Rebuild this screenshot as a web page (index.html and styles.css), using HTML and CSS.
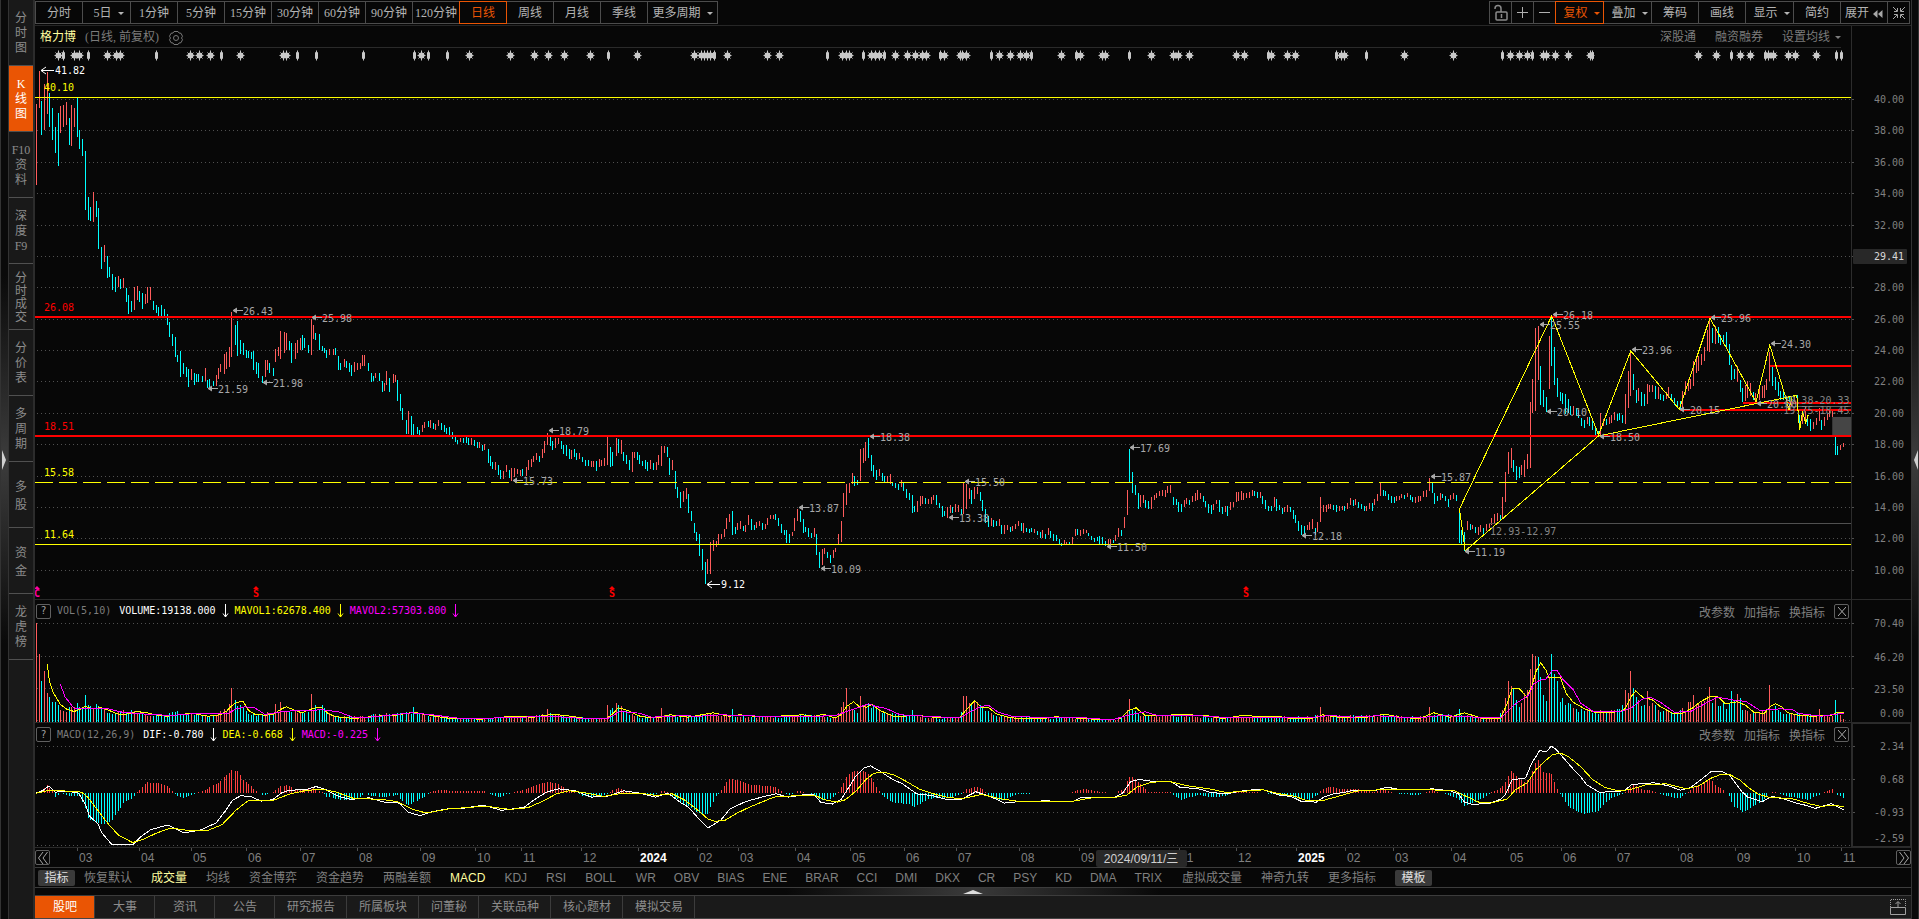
FILE: index.html
```html
<!DOCTYPE html>
<html lang="zh-CN">
<head>
<meta charset="utf-8">
<title>格力博 日线</title>
<link rel="stylesheet" href="styles.css">
</head>
<body>
<div class="app">
  <button class="strip strip-left" aria-label="展开左侧栏"><svg width="4" height="20" viewBox="0 0 4 20"><path d="M0 0L4 10L0 20Z" fill="#d0d0d0"/></svg></button>
  <nav class="side">
    <button>分<br>时<br>图</button>
    <button class="on">K<br>线<br>图</button>
    <button>F10<br>资<br>料</button>
    <button>深<br>度<br>F9</button>
    <button class="tight">分<br>时<br>成<br>交</button>
    <button>分<br>价<br>表</button>
    <button>多<br>周<br>期</button>
    <button class="loose">多<br>股</button>
    <button class="loose">资<br>金</button>
    <button>龙<br>虎<br>榜</button>
  </nav>
  <main class="work">
    <div class="toolbar">
      <div class="group">
        <button>分时</button><button class="drop">5日<i class="caret"></i></button><button>1分钟</button><button>5分钟</button><button>15分钟</button><button>30分钟</button><button>60分钟</button><button>90分钟</button><button>120分钟</button><button class="on">日线</button><button>周线</button><button>月线</button><button>季线</button><button class="wide">更多周期<i class="caret"></i></button>
      </div>
      <div class="group">
        <button class="icon" aria-label="锁定"><svg width="16" height="18" viewBox="0 0 16 18" fill="none" stroke="#8a8a8a"><rect x="3" y="8" width="11" height="8" rx="1" stroke-width="1.5"/><path d="M8.5 10v4M2 5V4.500a3 3 0 0 1 6 0V8" stroke-width="1.5"/></svg></button>
        <button class="icon" aria-label="放大"><svg width="13" height="13" viewBox="0 0 13 13" stroke="#b0b0b0"><path d="M1 6.500H12M6.500 1V12"/></svg></button>
        <button class="icon" aria-label="缩小"><svg width="13" height="13" viewBox="0 0 13 13" stroke="#b0b0b0"><path d="M1 6.500H12"/></svg></button>
        <button class="drop on">复权<i class="caret"></i></button><button class="drop">叠加<i class="caret"></i></button><button>筹码</button><button>画线</button><button class="drop">显示<i class="caret"></i></button><button>简约</button>
        <button>展开<svg width="10" height="8" viewBox="0 0 10 8" fill="#a8a8a8"><path d="M4.500 0V8L0 4ZM9.500 0V8L5 4Z"/></svg></button>
        <button class="icon" aria-label="收起"><svg width="14" height="14" viewBox="0 0 14 14" fill="none" stroke="#a8a8a8"><path d="M1 1L5 5M2 5.500H5.500V2M13 1L9 5M12 5.500H8.500V2M1 13L5 9M2 8.500H5.500V12M13 13L9 9M12 8.500H8.500V12"/></svg></button>
      </div>
    </div>

    <section class="panel panel-main">
      <div class="plot">
        <header class="title">
          <h1>格力博</h1><span>(日线, 前复权)</span>
          <button aria-label="设置"><svg width="16" height="16" viewBox="0 0 16 16" fill="none" stroke="#777"><path d="M6 1.500h4l1 1.500l2 .3l1.500 3l-1 1.700l1 1.700l-1.500 3l-2 .3l-1 1.500h-4l-1-1.500l-2-.3l-1.500-3l1-1.700l-1-1.700l1.500-3l2-.3Z"/><circle cx="8" cy="8" r="2.500"/></svg></button>
          <div class="links"><a href="#">深股通</a><a href="#">融资融券</a><a href="#">设置均线<i class="caret"></i></a></div>
        </header>
        <svg class="canvas" id="price"></svg>
      </div>
      <svg class="axis" id="priceAxis"></svg>
    </section>

    <section class="panel panel-vol">
      <div class="plot">
        <header class="legend">
          <button class="box" aria-label="指标说明">?</button><span class="name">VOL(5,10)</span>
          <span class="white">VOLUME:19138.000</span><svg class="white" width="7" height="14" viewBox="0 0 7 14"><path d="M3.500 0V13M1 9.500L3.500 13L6 9.500"/></svg>
          <span class="yellow">MAVOL1:62678.400</span><svg class="yellow" width="7" height="14" viewBox="0 0 7 14"><path d="M3.500 0V13M1 9.500L3.500 13L6 9.500"/></svg>
          <span class="magenta">MAVOL2:57303.800</span><svg class="magenta" width="7" height="14" viewBox="0 0 7 14"><path d="M3.500 0V13M1 9.500L3.500 13L6 9.500"/></svg>
          <div class="tools"><button>改参数</button><button>加指标</button><button>换指标</button><button class="box" aria-label="关闭"><svg width="8" height="9" viewBox="0 0 8 9"><path d="M0 0L8 9M8 0L0 9"/></svg></button></div>
        </header>
        <svg class="canvas" id="vol"></svg>
      </div>
      <svg class="axis" id="volAxis"></svg>
    </section>

    <section class="panel panel-macd">
      <div class="plot">
        <header class="legend">
          <button class="box" aria-label="指标说明">?</button><span class="name">MACD(12,26,9)</span>
          <span class="white">DIF:-0.780</span><svg class="white" width="7" height="14" viewBox="0 0 7 14"><path d="M3.500 0V13M1 9.500L3.500 13L6 9.500"/></svg>
          <span class="yellow">DEA:-0.668</span><svg class="yellow" width="7" height="14" viewBox="0 0 7 14"><path d="M3.500 0V13M1 9.500L3.500 13L6 9.500"/></svg>
          <span class="magenta">MACD:-0.225</span><svg class="magenta" width="7" height="14" viewBox="0 0 7 14"><path d="M3.500 0V13M1 9.500L3.500 13L6 9.500"/></svg>
          <div class="tools"><button>改参数</button><button>加指标</button><button>换指标</button><button class="box" aria-label="关闭"><svg width="8" height="9" viewBox="0 0 8 9"><path d="M0 0L8 9M8 0L0 9"/></svg></button></div>
        </header>
        <svg class="canvas" id="macd"></svg>
      </div>
      <svg class="axis boxed" id="macdAxis"></svg>
    </section>

    <div class="timeline">
      <button class="box" aria-label="向前"><svg width="10" height="12" viewBox="0 0 10 12"><path d="M5 0L0.500 6L5 12M9.500 0L5 6L9.500 12"/></svg></button>
      <svg id="dates"></svg>
      <button class="box" aria-label="向后"><svg width="10" height="12" viewBox="0 0 10 12"><path d="M0.500 0L5 6L0.500 12M5 0L9.500 6L5 12"/></svg></button>
    </div>

    <nav class="indicators">
      <div class="set"><button class="chip">指标</button><button class="near">恢复默认</button><button class="on">成交量</button><button>均线</button><button>资金博弈</button><button>资金趋势</button><button>两融差额</button><button class="on">MACD</button><button>KDJ</button><button>RSI</button><button>BOLL</button></div>
      <div class="set latin"><button>WR</button><button>OBV</button><button>BIAS</button><button>ENE</button><button>BRAR</button><button>CCI</button><button>DMI</button><button>DKX</button><button>CR</button><button>PSY</button><button>KD</button><button>DMA</button><button>TRIX</button></div>
      <div class="set"><button>虚拟成交量</button><button>神奇九转</button><button>更多指标</button><button class="chip">模板</button></div>
    </nav>

    <button class="handle" aria-label="展开下方"><svg width="20" height="4" viewBox="0 0 20 4"><path d="M0 4L10 0L20 4Z" fill="#ddd"/></svg></button>

    <nav class="tabs">
      <button class="on">股吧</button><button>大事</button><button>资讯</button><button>公告</button><button>研究报告</button><button>所属板块</button><button>问董秘</button><button>关联品种</button><button>核心题材</button><button>模拟交易</button>
      <button class="dock" aria-label="弹出"><svg width="16" height="16" viewBox="0 0 16 16" fill="none" stroke="#a0a0a0"><path d="M.5 8.500h15v7H.5Z"/><path d="M.5 8V.5h15V8" stroke-dasharray="1 1"/><path d="M8 8V3M5.500 5L8 2.500L10.500 5"/></svg></button>
    </nav>
  </main>
  <button class="strip strip-right" aria-label="展开右侧栏"><svg width="4" height="20" viewBox="0 0 4 20"><path d="M4 0L0 10L4 20Z" fill="#d0d0d0"/></svg></button>
</div>
<script src="charts.js"></script>
</body>
</html>
```
FILE: styles.css
```css
* { box-sizing: border-box; }

body {
  margin: 0;
  background: #070707;
  color: #a0a0a0;
  font: 12px/15px "Liberation Serif", "Noto Sans CJK SC", serif;
}

button {
  margin: 0;
  padding: 0;
  border: 0;
  background: none;
  color: inherit;
  font: inherit;
  white-space: nowrap;
}

a { color: inherit; text-decoration: none; }

svg { display: block; flex: none; }

.app { display: flex; height: 100vh; overflow: hidden; }

.strip { width: 8px; display: flex; align-items: center; }
.strip-left {
  border-left: 1px solid #333;
  background: linear-gradient(#0a0a0a 30%, #3c3c3c 50%, #0a0a0a 70%);
  padding-left: 1px;
}
.strip-right {
  border-right: 1px solid #333;
  border-left: 1px solid #333;
  background: linear-gradient(#0a0a0a 30%, #3c3c3c 50%, #0a0a0a 70%);
  padding-left: 2px;
}

.side {
  width: 27px;
  display: flex;
  flex-direction: column;
  background: #191919;
  border-left: 1px solid #333;
  border-right: 2px solid #2c2c2c;
}
.side button { height: 66px; padding-top: 2px; border-bottom: 1px solid #505050; color: #8c8c8c; }
.side .tight { line-height: 13px; }
.side .loose { line-height: 18px; }
.side .on { background: #ea5504; color: #fff; }

.work { flex: 1; min-width: 0; display: flex; flex-direction: column; border-bottom: 1px solid #444; }

.toolbar {
  height: 26px;
  padding: 1px 1px 0 0;
  display: flex;
  justify-content: space-between;
  border-bottom: 1px solid #262626;
}
.group { display: flex; }
.group button {
  position: relative;
  width: 48px;
  height: 23px;
  padding-top: 2px;
  margin-right: -1px;
  border: 1px solid #4c4c4c;
  display: flex;
  align-items: center;
  justify-content: center;
  gap: 6px;
  color: #b4b4b4;
}
.group button.icon { width: 23px; padding: 0; }
.group button.drop { width: 49px; padding-left: 4px; }
.group button.wide { width: 71px; }
.group button.on { z-index: 1; border-color: #ea5504; color: #ea5504; }
.group:last-child button { gap: 4px; }
.group:last-child button.drop { gap: 6px; }
.group:last-child button:last-child { margin-right: 0; }

.caret {
  display: inline-block;
  border: 3px solid transparent;
  border-top-color: currentColor;
  border-bottom: 0;
}

.panel { display: flex; min-height: 0; border-bottom: 1px solid #2a2a2a; }
.panel-main { flex: 575; }
.panel-vol { flex: 123; }
.panel-macd { flex: 124; }

.plot { flex: 1; min-width: 0; display: flex; flex-direction: column; border-right: 1px solid #2c2c2c; }
.canvas { width: 100%; flex: 1; min-height: 0; }
.axis { width: 59px; height: 100%; }
.axis.boxed { border: 1px solid #2c2c2c; }

.title {
  height: 22px;
  padding-top: 2px;
  margin: 0 10px 0 5px;
  display: flex;
  align-items: center;
  gap: 9px;
  border-bottom: 1px solid #2a2a2a;
  color: #7c7c7c;
}
.title h1 { margin: 0; font: inherit; color: #ffffa0; }
.links { margin-left: auto; display: flex; gap: 19px; }
.links .caret { margin: 0 0 2px 5px; }

.legend {
  height: 22px;
  padding: 1px 2px 0 1px;
  display: flex;
  align-items: center;
  gap: 6px;
  font: 10px/14px "DejaVu Sans Mono", monospace;
}
.legend svg { fill: none; stroke: currentColor; }
.name { color: #7c7c7c; margin-right: 2px; }
.white { color: #fff; }
.yellow { color: #ff0; }
.magenta { color: #f0f; }
.tools {
  margin-left: auto;
  display: flex;
  align-items: center;
  gap: 9px;
  color: #808080;
  font: 12px/15px "Noto Sans CJK SC", sans-serif;
}
.box {
  width: 15px;
  height: 15px;
  display: flex;
  align-items: center;
  justify-content: center;
  border: 1px solid #606060;
  border-radius: 2px;
}
.legend .box svg, .timeline .box svg { fill: none; stroke: #a8a8a8; }

text { font: 10px "DejaVu Sans Mono", monospace; }
.date { font: 12px "Liberation Sans", "Noto Sans CJK SC", sans-serif; }

.timeline { height: 19px; display: flex; align-items: center; }
.timeline svg#dates { flex: 1; width: 0; height: 100%; }

.indicators {
  height: 21px;
  padding: 1px 0 0 3px;
  display: flex;
  align-items: center;
  gap: 20px;
  border-top: 1px solid #3c3c3c;
  border-bottom: 1px solid #3c3c3c;
  color: #808080;
  font: 12px/15px "Liberation Sans", "Noto Sans CJK SC", sans-serif;
}
.set { display: flex; align-items: center; gap: 19px; }
.set.latin { gap: 18px; }
.indicators .near { margin-left: -10px; }
.indicators .on { color: #ffffa0; }
.indicators .chip { width: 37px; height: 16px; border-radius: 2px; background: #3a3a3a; color: #e0e0e0; }

.handle {
  height: 7px;
  display: flex;
  justify-content: center;
  align-items: center;
  background: linear-gradient(90deg, #080808 40%, #3a3a3a 50%, #080808 60%);
}

.tabs { height: 23px; display: flex; background: #1a1a1a; border-top: 1px solid #3c3c3c; color: #8c8c8c; }
.tabs button { min-width: 60px; padding: 0 11px 0 12px; border-right: 1px solid #3c3c3c; }
.tabs .on { background: #ea5504; color: #fff; }
.tabs .dock { min-width: 0; margin-left: auto; padding: 0 5px; border: 0; display: flex; align-items: center; }
```
FILE: charts.js
```js
// Horizontal data units span the whole plot; vertical units are thirds of a pixel at the base height.
const SPAN = 4453;
const SECOND = 1568 - 86, THIRD = 3136 - 86, FIRST = -86;

const parse = (text, offset) => text.trim().split(/\s+/).map(t => {
  const v = t.split(',').map(Number);
  v[0] += offset;
  return v;
});
const join = (a, b, c) => [...parse(a, FIRST), ...parse(b, SECOND), ...parse(c, THIRD)];

const bars = join(`
89,312,555 97,213,324 101,303,405 109,252,391 116,216,342 121,279,381 128,324,420 136,381,459 143,339,498 148,318,399 155,315,381 163,306,375 170,354,435 175,315,438 182,324,381 190,294,411 195,390,447 202,417,468 209,453,630 217,591,660 221,621,663 229,576,666 236,603,651 241,624,747 248,741,807 256,735,786 263,768,834 268,800,831 275,822,870 283,831,876 291,828,861 295,837,867 302,834,864 310,864,906 315,885,942 322,903,935 329,861,930 337,858,900 342,873,906 349,879,927 356,882,912 361,861,910 368,861,900 376,903,930 383,915,940 388,921,948 395,915,950 403,927,950 410,942,976 415,966,1010 422,1002,1037 430,1011,1070 435,1064,1086 442,1053,1130 449,1089,1123 457,1101,1132 462,1107,1160 469,1107,1140 476,1119,1155 482,1122,1146 488,1122,1146 496,1128,1146 503,1104,1143 508,1140,1164 515,1137,1164 523,1143,1158 530,1125,1158 535,1104,1137 542,1092,1116 550,1062,1122 555,1056,1107 562,1041,1101 569,936,1070 577,975,1035 582,963,1067 589,1020,1062 597,1029,1064 604,1050,1074 609,1053,1074 616,1056,1077 623,1053,1110 628,1086,1122 635,1089,1134 643,1128,1148 650,1080,1131 655,1080,1110 662,1089,1120 670,1104,1127 675,1047,1085 682,1041,1067 689,993,1077 697,996,1060 702,999,1050 709,1023,1050 716,1029,1089 724,1029,1077 729,1020,1058 736,1014,1050 743,1005,1050 748,1014,1044 756,1035,1059 763,957,1065 770,975,1017 775,999,1020 783,1002,1050 790,1038,1053 795,1044,1059 802,1050,1074 809,1047,1064 817,1047,1065 822,1044,1065 829,1068,1110 836,1089,1110 844,1077,1100 849,1083,1104 856,1089,1116 863,1095,1128 869,1086,1116 876,1089,1110 883,1089,1107 890,1065,1098 895,1065,1098 903,1089,1113 910,1119,1146 915,1128,1143 922,1119,1134 930,1119,1143 937,1143,1176 942,1149,1173 949,1113,1155 956,1134,1176 964,1122,1149 969,1125,1147 976,1140,1203 983,1182,1233 988,1224,1260 996,1260,1302 1003,1233,1302 1010,1248,1305 1015,1272,1305 1023,1281,1302 1030,1290,1305 1035,1275,1296 1042,1266,1284 1050,1263,1281 1057,1260,1284 1062,1269,1287 1069,1272,1290 1076,1260,1278 1084,1269,1290 1089,1275,1296 1096,1284,1302 1103,1281,1308 1116,1308,1326 1123,1320,1332 1130,1314,1326 1150,1314,1335 1170,1326,1344 1189,1332,1350 1197,1347,1389 1209,1386,1407 1223,1395,1425 1228,1410,1437 1236,1413,1437 1243,1395,1416 1250,1410,1434 1255,1404,1443 1270,1407,1422 1282,1407,1428 1290,1401,1428 1297,1380,1410 1309,1368,1386 1316,1359,1380 1323,1368,1386 1336,1323,1359 1343,1299,1335 1349,1308,1338 1356,1323,1350 1363,1314,1344 1370,1314,1332 1383,1335,1362 1390,1335,1368 1402,1350,1377 1415,1359,1380 1429,1371,1386 1443,1380,1398 1456,1383,1401 1464,1383,1413 1476,1380,1398 1489,1365,1395 1491,1311,1395 1496,1340,1400 1503,1356,1397 1511,1314,1368 1518,1317,1359 1523,1320,1362 1530,1356,1383 1537,1365,1392 1543,1380,1410 1550,1356,1416 1557,1356,1374 1564,1356,1380`, `
1,1365,1392 8,1383,1398 16,1380,1407 21,1386,1413 28,1380,1407 35,1389,1410 43,1386,1410 48,1365,1395 55,1338,1398 62,1338,1359 70,1341,1371 75,1374,1425 82,1380,1410 89,1413,1467 94,1461,1494 101,1476,1524 109,1473,1506 116,1464,1497 121,1482,1539 128,1533,1563 136,1569,1599 141,1596,1623 148,1602,1668 155,1647,1710 163,1686,1752 168,1677,1722 175,1626,1722 182,1620,1653 190,1623,1641 195,1602,1632 202,1602,1617 209,1587,1611 214,1554,1587 221,1542,1566 229,1533,1605 236,1581,1602 241,1569,1590 248,1563,1587 256,1578,1593 261,1575,1596 268,1545,1575 275,1557,1590 283,1575,1590 288,1566,1584 295,1563,1578 302,1569,1590 309,1572,1587 315,1554,1575 322,1545,1557 329,1545,1557 334,1542,1560 342,1554,1578 349,1572,1599 356,1590,1605 361,1590,1629 368,1602,1629 376,1596,1608 381,1554,1593 388,1527,1563 395,1533,1566 403,1557,1599 408,1581,1596 415,1584,1611 422,1599,1614 430,1584,1611 435,1602,1665 442,1656,1704 449,1647,1695 454,1644,1662 462,1656,1674 469,1665,1689 476,1650,1674 481,1644,1656 489,1602,1632 496,1563,1626 501,1479,1551 508,1452,1515 515,1449,1479 523,1419,1452 528,1428,1458 535,1440,1456 542,1347,1443 550,1344,1389 555,1326,1383 562,1314,1374,1 569,1365,1413 574,1395,1431 582,1410,1440 589,1407,1428 596,1419,1443 601,1428,1446 608,1428,1446 616,1422,1452 621,1449,1458 628,1449,1464 635,1452,1470 642,1440,1461 648,1449,1473 655,1467,1494 662,1479,1500 670,1485,1539 675,1518,1536 682,1503,1536 689,1488,1518 701,1494,1512 709,1497,1512 716,1491,1512 721,1485,1500 728,1485,1515 736,1509,1524 743,1518,1551 748,1533,1548 756,1521,1554 763,1515,1539 768,1521,1539 775,1512,1536 783,1515,1536 790,1527,1542 795,1446,1542 802,1452,1527 809,1464,1497 814,1470,1512 822,1461,1497 829,1461,1482 836,1476,1503 841,1500,1533 849,1527,1569 856,1548,1581 863,1554,1578 876,1563,1578 883,1557,1578 888,1575,1602 895,1575,1602 903,1575,1590 915,1578,1593 930,1563,1578 942,1569,1599 950,1584,1596 962,1584,1596 976,1593,1605 989,1590,1614 996,1602,1617 1003,1584,1605 1015,1602,1623 1030,1617,1632 1035,1629,1638 1042,1620,1632 1054,1626,1635 1062,1611,1632 1069,1587,1608 1081,1590,1608 1096,1590,1600 1109,1608,1620 1123,1611,1623 1128,1608,1632 1143,1623,1639 1150,1617,1635 1162,1620,1630 1175,1584,1611 1182,1590,1608 1189,1551,1584 1197,1470,1545 1201,1347,1446,1 1209,1416,1478,1 1216,1455,1485 1224,1479,1527 1236,1485,1509 1248,1503,1527 1256,1491,1527 1262,1485,1500 1275,1473,1488 1289,1470,1491 1296,1458,1479 1302,1455,1479 1309,1491,1515 1316,1497,1515 1321,1506,1536 1329,1512,1536 1336,1500,1521 1349,1500,1515 1363,1479,1503 1368,1470,1500 1376,1479,1497 1389,1503,1521 1396,1512,1539 1402,1515,1542 1416,1500,1512 1422,1500,1536 1429,1521,1542 1436,1518,1536 1442,1518,1548 1449,1506,1530 1456,1506,1521 1464,1476,1506 1476,1473,1500 1489,1479,1494 1503,1470,1488 1509,1473,1488 1523,1476,1494 1535,1500,1527 1543,1518,1533 1550,1518,1533 1557,1491,1521 1562,1497,1533`, `
1,1515,1530 8,1524,1542 15,1521,1535 21,1515,1535 28,1521,1536 35,1530,1557 41,1545,1569 48,1563,1593 55,1575,1605 62,1578,1605 70,1575,1590 82,1557,1587 89,1584,1605 94,1566,1596 102,1491,1566 109,1515,1536 116,1515,1536 121,1512,1527 134,1515,1530 142,1515,1536 148,1518,1533 156,1518,1530 168,1509,1527 176,1494,1515 182,1500,1518 195,1506,1524 203,1512,1527 215,1518,1533 229,1509,1533 235,1497,1515 242,1482,1503 249,1449,1488 256,1470,1488 262,1473,1488 269,1482,1500 276,1488,1509 289,1488,1503 302,1482,1494 316,1479,1491 322,1485,1500 335,1491,1509 348,1488,1503 361,1470,1491 370,1434,1473 376,1449,1479 382,1479,1512 388,1488,1503 396,1479,1500 402,1482,1494 409,1488,1503 416,1497,1521 422,1485,1500 435,1485,1503 443,1527,1629 449,1590,1635 455,1596,1653 462,1563,1590 469,1572,1590 476,1575,1587 489,1581,1605 502,1584,1602 509,1572,1593 516,1569,1584 522,1554,1575 529,1542,1569 536,1539,1563 543,1545,1563 548,1491,1557 555,1416,1506 563,1356,1422 570,1344,1404 575,1380,1416 583,1398,1440 590,1401,1434 595,1395,1425 602,1380,1431 610,1362,1407 617,1206,1404 622,1137,1239 629,984,1233 637,978,1140 641,1098,1215 649,1170,1221 656,1191,1236 663,1008,1167 669,948,1098,1 676,1041,1155 683,1134,1191 690,1176,1203 695,1179,1212 703,1182,1242 710,1197,1239 715,1218,1245 722,1218,1245 730,1224,1248 735,1230,1254 742,1254,1278 750,1260,1284 757,1251,1272 762,1251,1278 769,1254,1290 777,1281,1305 784,1293,1305 789,1239,1305 796,1257,1278 803,1257,1275 810,1251,1272 816,1245,1269 823,1236,1260 830,1242,1263 843,1245,1269 850,1182,1272 863,1056,1188 870,1122,1170 877,1170,1209 883,1164,1203 890,1176,1218 897,1182,1218 904,1152,1212 910,1155,1176 917,1155,1176 924,1158,1197 930,1161,1197 937,1182,1200 950,1176,1197 956,1161,1194 964,1182,1200 977,1203,1224 984,1203,1230 990,1173,1224 997,1143,1185 1010,1137,1167 1017,1083,1158 1024,1077,1119 1030,1068,1113 1037,1062,1095 1044,1041,1083 1051,990,1053 1057,954,1056 1064,984,1029,1 1071,978,1032 1077,981,1029 1084,1005,1035 1091,1005,1032 1098,996,1044 1104,1032,1095 1111,1095,1140 1118,1107,1137 1124,1098,1146 1131,1140,1176 1138,1164,1206 1149,1143,1194 1156,1149,1188 1163,1176,1200 1170,1179,1206 1185,1158,1194 1191,1155,1194 1197,1137,1170 1204,1056,1143 1211,1098,1158 1217,1131,1170 1224,1146,1188 1231,1173,1200 1244,1188,1212 1251,1191,1230 1258,1191,1218 1264,1191,1212 1271,1185,1230 1277,1245,1290 1284,1230,1272 1291,1221,1269 1297,1245,1278 1304,1257,1293 1311,1266,1287 1318,1254,1275 1325,1225,1262 1331,1260,1290 1338,1251,1278 1345,1242,1260 1351,1230,1251 1358,1233,1252 1366,1308,1365 1371,1338,1365 1378,1335,1350 1385,1329,1341`);

const volume = join(`
89,69 97,162 101,243 109,213 116,279 128,303 143,300 155,336 190,310 209,300 241,310 268,335 320,330 345,340 400,345 430,335 470,340 520,348 555,325 569,300 589,310 610,340 650,340 689,325 710,330 740,335 763,320 790,320 820,348 900,345 1015,335 1080,350 1180,354 1300,348 1350,335 1390,348 1480,355 1496,330 1520,310 1540,340 1567,345`, `
1,348 60,345 120,348 175,338 230,345 340,350 390,340 440,342 480,352 497,315 508,305 520,310 535,340 545,315 580,318 610,340 670,342 700,350 785,352 795,300 810,310 835,310 860,335 880,345 940,350 1070,352 1170,357 1190,345 1203,325 1230,345 1320,345 1420,350 1560,350`, `
1,350 102,345 240,345 360,348 380,342 440,342 480,348 540,354 548,320 560,262 570,240 583,290 595,310 605,280 617,210 629,170 637,180 649,250 656,290 663,210 669,180 676,225 690,290 700,300 710,300 720,320 750,330 800,335 840,325 855,280 875,290 890,315 905,290 930,325 980,335 1017,300 1030,305 1057,280 1071,295 1098,315 1111,300 1131,300 1140,325 1170,340 1190,330 1210,320 1224,325 1245,340 1320,345 1360,345 1371,335 1385,352`);
const peaks = join(`209,285,0 569,264,1 577,300,0 689,306,1 675,312,1 763,282,1 1015,321,0 1343,327,1 1491,315,1 1511,309,1`,
  `55,324,1 229,327,0 501,306,1 508,264,1 542,288,1 670,330,0 795,288,1 802,288,1 1197,330,1 1201,297,1`,
  `102,321,1 370,321,1 443,327,0 617,207,1 622,162,1 629,168,1 637,171,0 669,162,0 676,222,0 863,213,1 850,270,1 870,262,0 904,273,1 1017,285,1 1057,261,1 1111,273,0 1124,282,1 1204,255,1 1325,327,1 1366,300,0`);
const ma1 = join(`116,192 121,240 130,275 148,312 165,327 182,333 195,327 209,318 224,324 248,322 268,330 290,341 310,341 335,333 360,337 390,345 410,347 430,344 470,338 510,347 540,343 555,333 569,315 582,305 597,304 610,330 625,341 650,344 670,341 690,326 702,319 720,328 740,337 770,323 788,320 805,340 825,349 870,354 920,347 970,344 1015,335 1045,342 1090,352 1180,356 1250,348 1310,350 1355,341 1400,347 1440,355 1485,355 1503,340 1516,322 1540,330`,
  `1,347 20,351 50,351 75,343 120,350 180,337 220,347 245,343 290,348 340,347 400,343 430,348 450,341 480,352 493,345 508,318 525,304 540,319 558,320 570,312 590,330 625,348 665,346 690,346 740,352 785,352 800,330 822,301 840,322 855,320 875,340 910,352 985,355 1020,349 1080,353 1140,358 1180,354 1200,330 1218,322 1240,345 1330,343 1385,344 1430,354 1475,346`,
  `1,348 35,355 90,352 108,343 150,351 210,351 260,341 300,351 345,354 380,337 420,350 455,337 500,354 543,355 560,310 572,265 590,265 608,290 620,260 630,215 642,187 655,210 662,230 690,230 705,280 722,306 750,325 780,337 835,334 850,324 863,290 875,272 895,293 915,297 935,318 965,338 990,338 1015,322 1035,303 1060,287 1078,290 1095,310 1125,304 1145,315 1165,335 1190,339 1205,318 1218,310 1232,318 1248,337 1275,345 1310,347 1355,344 1370,335 1385,336`);
const ma2 = join(`148,252 160,290 182,324 265,325 300,335 345,340 420,345 480,339 560,338 580,325 600,319 625,322 650,342 700,332 790,328 830,334 870,352 920,349 1010,337 1060,343 1130,354 1230,352 1350,347 1430,354 1490,354 1520,333`,
  `1,338 30,350 100,346 150,347 200,343 340,349 480,346 510,332 540,320 562,310 580,318 605,324 640,343 700,347 785,352 810,335 835,320 855,314 880,335 915,348 1000,351 1080,351 1160,358 1195,345 1240,334 1270,345 1350,344 1440,351`,
  `1,350 80,351 125,345 180,350 240,346 310,351 360,350 400,345 500,351 545,352 575,315 595,298 612,285 625,250 640,240 655,236 670,212 682,210 695,235 722,268 740,308 770,332 835,334 865,322 890,297 910,290 935,305 970,335 1010,333 1040,313 1075,290 1120,300 1145,303 1180,330 1230,325 1260,328 1275,339 1330,347 1385,338`);
const dif = join(`89,580 105,572 120,559 135,577 170,575 193,580 210,615 220,650 240,672 250,700 275,736 325,736 345,712 370,690 412,676 450,700 490,692 530,670 555,630 570,602 590,588 615,590 640,604 668,600 690,580 710,571 750,570 775,560 800,570 830,590 860,599 905,594 945,608 980,610 1000,637 1030,648 1060,636 1100,627 1140,625 1185,616 1230,632 1285,623 1310,600 1340,577 1370,567 1410,573 1450,592 1490,589 1530,573`,
  `1,580 40,592 70,580 100,608 120,622 148,660 168,685 200,661 222,628 260,606 300,592 335,582 365,592 410,584 430,586 445,608 473,613 495,598 515,560 530,530 550,505 567,498 590,514 620,538 645,552 680,582 720,588 750,598 790,598 825,576 860,590 895,610 930,606 1000,603 1035,606 1065,604 1085,592 1165,593 1185,580 1205,545 1225,539 1260,545 1305,546 1325,562 1375,568 1400,578 1440,582 1480,573 1525,568`,
  `1,586 30,590 55,605 92,607 110,592 135,582 160,578 185,571 235,572 265,562 290,568 350,570 375,567 420,573 440,582 455,607 475,614 515,611 545,598 555,585 572,540 605,534 620,490 640,451 655,456 668,439 680,448 695,470 720,505 740,530 755,555 785,577 830,576 850,570 865,554 920,549 955,558 985,571 1010,563 1035,540 1060,515 1085,514 1105,526 1120,550 1135,575 1150,592 1185,606 1210,590 1240,598 1265,609 1290,616 1315,626 1355,612 1385,630`);
const dea = join(`89,580 125,571 200,577 215,592 240,632 265,672 290,706 325,729 350,720 385,700 420,685 470,694 510,692 545,675 580,630 610,602 670,602 710,583 750,572 790,568 825,577 870,597 930,598 975,606 1010,628 1045,640 1100,628 1190,619 1250,629 1295,624 1330,605 1365,582 1395,573 1430,578 1480,590 1530,580`,
  `1,580 40,587 80,582 110,600 140,628 168,658 185,665 210,662 240,640 270,622 330,592 380,588 430,587 455,600 485,607 505,600 530,575 555,540 575,520 600,517 625,526 655,545 685,567 715,580 760,594 795,596 840,584 880,596 925,604 1060,605 1110,594 1170,592 1195,586 1220,562 1255,547 1300,545 1340,557 1400,568 1440,578 1530,570`,
  `1,582 40,590 70,603 105,603 150,588 190,574 280,568 370,570 430,573 460,590 490,607 520,610 560,598 580,570 610,548 630,510 650,486 670,465 690,459 710,470 740,500 770,540 800,563 830,572 860,570 900,555 950,552 1000,567 1030,558 1060,535 1085,523 1105,524 1130,540 1150,562 1175,583 1200,592 1260,597 1300,612 1330,620 1360,616 1385,621`);
const hist = join(`89,580 100,572 116,557 128,572 136,592 150,578 165,588 195,590 205,612 217,655 222,662 240,670 248,674 263,672 275,660 290,635 305,605 322,598 335,580 345,565 361,548 385,550 410,558 420,572 435,588 449,594 475,582 490,577 510,566 540,545 560,520 569,511 582,513 597,540 616,560 628,575 645,588 662,581 675,572 690,558 705,556 730,570 770,566 788,575 800,590 820,597 850,602 880,595 895,581 910,588 945,592 975,585 985,600 1000,618 1020,605 1040,592 1060,574 1085,570 1110,574 1150,573 1190,574 1200,582 1225,593 1245,583 1265,576 1295,567 1320,552 1345,546 1365,550 1390,568 1410,577 1430,588 1465,592 1490,583 1505,570 1520,565 1540,576`,
  `1,583 35,588 55,574 70,576 90,595 105,610 120,617 140,635 155,645 168,642 180,610 190,590 202,572 215,545 222,537 248,543 275,555 335,561 350,575 370,588 390,573 405,577 425,585 450,602 470,597 485,583 497,560 510,528 525,513 555,515 567,530 580,558 592,580 605,597 630,610 660,613 675,621 690,612 710,597 770,592 790,582 802,569 825,561 845,570 860,595 890,602 915,590 930,582 1060,578 1090,566 1130,577 1165,580 1190,567 1201,530 1215,535 1235,560 1250,578 1300,576 1315,590 1330,600 1370,585 1400,593 1430,590 1465,577 1500,575 1530,580`,
  `1,585 40,594 75,600 95,585 105,570 125,560 150,567 190,567 230,577 262,568 280,580 340,586 375,570 395,579 415,585 440,597 455,618 475,610 505,592 520,578 545,565 555,545 570,512 585,530 605,550 617,530 630,485 637,481 650,520 662,520 670,524 680,560 690,583 710,620 730,635 750,642 783,635 800,610 820,592 845,583 855,570 870,555 890,568 920,573 940,584 980,597 1000,580 1017,565 1040,550 1057,535 1075,560 1090,570 1103,585 1115,618 1138,638 1160,622 1185,605 1205,577 1220,576 1240,588 1300,600 1335,578 1358,568 1370,585 1385,594`);

// Event marks: second value 1 draws the narrow form.
const marks = join(`143 154,1 182 194 216,1 262 285 294 383,1 465 488 515 542,1 589 695 702 728,1 775,1 890,1 1015,1 1032 1049,1 1096,1 1150 1250 1309 1343 1383 1448 1490,1 1563`,
  `135 150 158 166 174 182,1 214 314 342 461,1 497 507 515 549,1 569 578 588 601,1 628 655 675 694 702 736,1 748 785 792 802 863,1 883 909 934 948 961,1 1035 1070,1 1081 1135 1142 1201,1 1255 1309 1321 1348 1464 1483 1542,1 1550`,
  `20 40 141,1 153 160 214,1 308 428 548,1 566 590 608 621,1 648 656 676 710 762 769,1 1029 1071 1109,1 1130 1156 1191,1 1200 1212 1249 1265 1316 1366,1 1379,1`);

const calls = [
  [FIRST + 569, 932, '26.43'], [FIRST + 762, 952, '25.98'], [FIRST + 508, 1166, '21.59'], [FIRST + 643, 1148, '21.98'],
  [FIRST + 1343, 1292, '18.79'], [FIRST + 1255, 1442, '15.73'],
  [SECOND + 388, 1522, '13.87'], [SECOND + 442, 1705, '10.09'], [SECOND + 562, 1309, '18.38'], [SECOND + 795, 1445, '15.50'],
  [SECOND + 756, 1552, '13.38'], [SECOND + 1201, 1342, '17.69'], [SECOND + 1143, 1640, '11.50'],
  [THIRD + 370, 1430, '15.87'], [THIRD + 55, 1606, '12.18'], [THIRD + 455, 1654, '11.19'], [THIRD + 669, 943, '26.18'],
  [THIRD + 637, 973, '25.55'], [THIRD + 656, 1234, '20.10'], [THIRD + 784, 1309, '18.50'], [THIRD + 863, 1048, '23.96'],
  [THIRD + 982, 1230, '20.15'], [THIRD + 1057, 952, '25.96'], [THIRD + 1170, 1210, '20.60'], [THIRD + 1204, 1030, '24.30']
];

const months = [[195, '03'], [347, '04'], [474, '05'], [609, '06'], [741, '07'], [881, '08'], [1035, '09'], [1169, '10'], [1282, '11'], [1429, '12']].map(m => [m[0] + FIRST, m[1]])
  .concat([[1, '2024'], [146, '02'], [246, '03'], [386, '04'], [521, '05'], [653, '06'], [781, '07'], [935, '08'], [1082, '09'], [1327, '11'], [1469, '12']].map(m => [m[0] + SECOND, m[1]]))
  .concat([[46, '2025'], [166, '02'], [286, '03'], [428, '04'], [568, '05'], [696, '06'], [828, '07'], [983, '08'], [1123, '09'], [1271, '10'], [1384, '11']].map(m => [m[0] + THIRD, m[1]]));

const RED = '#ff5c5c', CYAN = '#00ffff';
const noise = i => { const s = Math.sin(i * 12.9898) * 43758.5453; return s - Math.floor(s); };

const candles = [];
bars.forEach((b, i) => {
  const p = bars[i - 1];
  if (p) {
    const n = Math.round((b[0] - p[0]) / 6.8);
    for (let k = 1; k < n; k++) {
      const f = k / n, d = (noise(i + k) - 0.5) * 12;
      candles.push([p[0] + (b[0] - p[0]) * f, p[1] + (b[1] - p[1]) * f + d, p[2] + (b[2] - p[2]) * f + d]);
    }
  }
  candles.push(b);
});
candles.forEach((c, i) => {
  const p = candles[i - 1];
  c.up = c[3] ? false : i === 0 || c[1] + c[2] < p[1] + p[2] + (noise(i) - 0.5) * 24;
});

const at = (pts, u) => {
  let i = 1;
  while (i < pts.length - 1 && pts[i][0] < u) i++;
  const a = pts[i - 1], b = pts[i];
  const f = Math.max(0, Math.min(1, (u - a[0]) / (b[0] - a[0])));
  return a[1] + (b[1] - a[1]) * f;
};

const el = id => document.getElementById(id);

function scale(id, top, height) {
  const r = el(id).getBoundingClientRect();
  return {
    w: r.width,
    h: r.height,
    x: u => u * r.width / SPAN,
    y: t => (t - top) / 3 * r.height / height
  };
}
const px = v => Math.floor(v) + 0.5;
const line = (x1, y1, x2, y2, stroke, extra = '') => `<path d="M${x1} ${y1}L${x2} ${y2}" stroke="${stroke}" fill="none" shape-rendering="crispEdges" ${extra}/>`;
const text = (x, y, s, fill, extra = '') => `<text x="${x}" y="${y}" fill="${fill}" ${extra}>${s}</text>`;
const stems = (d, stroke) => `<path d="${d}" stroke="${stroke}" shape-rendering="crispEdges"/>`;
const poly = (s, pts, stroke) => `<polyline points="${pts.map(p => s.x(p[0]).toFixed(1) + ',' + s.y(p[1]).toFixed(1)).join(' ')}" fill="none" stroke="${stroke}" shape-rendering="crispEdges"/>`;
const grid = (s, rows) => rows.map(t => line(2, px(s.y(t)), s.w, px(s.y(t)), '#505050', 'stroke-dasharray="1 3"')).join('');

const priceRows = [298, 391, 487, 580, 676, 769, 862, 958, 1051, 1144, 1240, 1333, 1429, 1522, 1615, 1711];

function drawPrice() {
  const s = scale('price', 144, 551);
  let o = grid(s, priceRows);
  const level = (from, t, color, width, extra) => line(from, px(s.y(t)), s.w, px(s.y(t)), color, `stroke-width="${width}" ${extra || ''}`);

  const paths = { up: '', down: '' };
  candles.forEach(c => { paths[c.up ? 'up' : 'down'] += `M${px(s.x(c[0]))} ${Math.round(s.y(c[1]))}V${Math.round(s.y(c[2]))}`; });
  o += stems(paths.up, RED) + stems(paths.down, CYAN);

  o += level(0, 292, '#ff0', 1) + level(0, 1633, '#ff0', 1) + level(0, 1447, '#ff0', 1, 'stroke-dasharray="18 6"');
  o += level(s.x(THIRD + 516), 1570, '#505050', 1) + level(s.x(THIRD + 1245), 1221, '#606060', 1);
  o += `<rect x="${s.x(THIRD + 1357)}" y="${s.y(1251)}" width="${s.w - s.x(THIRD + 1357)}" height="${s.y(1308) - s.y(1251)}" fill="#454545"/>`;
  [[0, 950], [0, 1308], [THIRD + 1204, 1098], [THIRD + 1137, 1209], [THIRD + 984, 1230]].forEach(r => {
    const y = Math.round(s.y(r[1]));
    o += line(s.x(r[0]), y, s.w, y, '#f00', 'stroke-width="2"');
  });

  const trends = [
    [[443, 1527], [669, 948], [784, 1305], [863, 1053], [982, 1228], [1057, 954], [1170, 1206], [1204, 1035], [1246, 1206], [1251, 1230], [1258, 1191], [1270, 1186], [1277, 1291], [1284, 1235], [1292, 1269], [1298, 1245]],
    [[443, 1527], [457, 1653], [784, 1308], [1270, 1186]]
  ];
  trends.forEach(z => { o += poly(s, z.map(p => [p[0] + THIRD, p[1]]), '#ff0'); });

  marks.forEach(m => {
    const x = Math.round(s.x(m[0])) + 0.5, y = Math.round(s.y(166)) + 0.5;
    o += m[1]
      ? `<path d="M${x} ${y - 5}V${y + 5}M${x - 1.5} ${y - 2.5}h3M${x - 1.5} ${y + 2.5}h3" stroke="#c8c8c8"/><path d="M${x} ${y - 3}v6" stroke="#c8c8c8" stroke-width="3"/>`
      : `<path d="M${x} ${y - 5}V${y + 5}M${x - 4} ${y}H${x + 4}M${x - 3} ${y - 3}l6 6M${x + 3} ${y - 3}l-6 6" stroke="#c8c8c8"/><circle cx="${x}" cy="${y}" r="3" fill="#c8c8c8"/>`;
  });

  [[262, '40.10', '#ff0'], [921, '26.08', '#f00'], [1278, '18.51', '#f00'], [1417, '15.58', '#ff0'], [1603, '11.64', '#ff0']]
    .forEach(l => { o += text(9, Math.round(s.y(l[0])) + 4, l[1], l[2]); });

  calls.forEach(c => {
    const x = Math.round(s.x(c[0])) + 1, y = px(s.y(c[1]));
    o += `<path d="M${x} ${y}h10M${x + 4} ${y - 2.5}L${x} ${y}L${x + 4} ${y + 2.5}" stroke="#a8a8a8" fill="#a8a8a8"/>` + text(x + 10, y + 4, c[2], '#a8a8a8');
  });
  [[FIRST + 100, 213, '41.82'], [SECOND + 167, 1753, '9.12']].forEach(c => {
    const x = Math.round(s.x(c[0])), y = px(s.y(c[1]));
    o += `<path d="M${x} ${y}h13M${x + 5} ${y - 3.5}L${x} ${y}L${x + 5} ${y + 3.5}" stroke="#fff" fill="none"/>` + text(x + 14, y + 3, c[2], '#fff');
  });
  [[THIRD + 518, 1593, '12.93-12.97'], [THIRD + 1237, 1200, '20.38-20.33'], [THIRD + 1237, 1231, '19.75-18.45']]
    .forEach(l => { o += text(s.x(l[0]), Math.round(s.y(l[1])) + 4, l[2], '#858585'); });

  [[FIRST + 90, '#ff00a0', 'C'], [FIRST + 627, '#f00', 'S'], [FIRST + 1501, '#f00', 'S'], [SECOND + 1487, '#f00', 'S']].forEach(m => {
    const x = Math.round(s.x(m[0])), y = Math.round(s.y(1775));
    o += `<path d="M${x - 3} ${y - 3}L${x} ${y - 6}L${x + 3} ${y - 3}Z" fill="${m[1]}"/>` + text(x, y + 5, m[2], m[1], 'text-anchor="middle" style="font-weight:bold"');
  });
  el('price').innerHTML = o;

  axis('priceAxis', s, priceRows, priceRows.map((t, i) => [t, i === 5 ? '' : (40 - i * 2).toFixed(2)]), 22);
  const y = Math.round(22 + s.y(769));
  el('priceAxis').innerHTML += `<rect x="1" y="${y - 7}" width="54" height="15" rx="1" fill="#282828"/>` + text(52, y + 4, '29.41', '#d8d8d8', 'text-anchor="end"');
}

function axis(id, s, ticks, labels, offset, edge = 52) {
  el(id).innerHTML = ticks.map(t => line(0, px(offset + s.y(t)), 2, px(offset + s.y(t)), '#505050')).join('') +
    labels.map(l => text(edge, Math.round(offset + s.y(l[0])) + 4, l[1], '#808080', 'text-anchor="end"')).join('');
}

function drawVolume() {
  const s = scale('vol', 66, 100);
  const base = Math.round(s.y(363));
  const paths = { up: '', down: '' };
  candles.forEach((c, i) => {
    const h = (362 - at(volume, c[0])) * (i < 6 ? 1 : 0.7 + 0.45 * noise(i * 3));
    paths[c.up ? 'up' : 'down'] += `M${px(s.x(c[0]))} ${base}V${Math.min(base - 1, Math.round(s.y(362 - h)))}`;
  });
  peaks.forEach(p => { paths[p[2] ? 'up' : 'down'] += `M${px(s.x(p[0]))} ${base}V${Math.round(s.y(p[1]))}`; });
  el('vol').innerHTML = grid(s, [70, 169, 265, 361]) + stems(paths.up, RED) + stems(paths.down, CYAN) + poly(s, ma1, '#ff0') + poly(s, ma2, '#f0f');
  axis('volAxis', s, [70, 169, 265], [[70, '70.40'], [169, '46.20'], [265, '23.50'], [339, '0.00']], 22);
}

function drawMacd() {
  const s = scale('macd', 435, 102);
  const zero = Math.round(s.y(580));
  const paths = { up: '', down: '' };
  candles.forEach(c => {
    const v = at(hist, c[0]);
    paths[v < 580 ? 'up' : 'down'] += `M${px(s.x(c[0]))} ${zero}V${Math.round(s.y(v))}`;
  });
  el('macd').innerHTML = grid(s, [439, 538, 637, 737]) + stems(paths.up, '#ff4040') + stems(paths.down, CYAN) + poly(s, dif, '#fff') + poly(s, dea, '#ff0');
  axis('macdAxis', s, [439, 538, 637], [[439, '2.34'], [538, '0.68'], [637, '-0.93'], [714, '-2.59']], 21, 51);
}

function drawDates() {
  const s = scale('price', 144, 551);
  const left = el('dates').getBoundingClientRect().left - el('price').getBoundingClientRect().left;
  let o = '';
  months.forEach(m => {
    const x = Math.round(s.x(m[0]) - left);
    o += line(x - 2 + 0.5, 0, x - 2 + 0.5, 3, '#505050');
    const year = m[1].length > 2;
    o += `<text class="date" x="${x}" y="14" fill="${year ? '#fff' : '#808080'}" ${year ? 'style="font-weight:bold"' : ''}>${m[1]}</text>`;
  });
  const b = Math.round(s.x(SECOND + 1120) - left);
  o += `<rect x="${b}" y="2" width="91" height="17" rx="2" fill="#282828"/><text class="date" x="${b + 45}" y="15" fill="#d0d0d0" text-anchor="middle">2024/09/11/三</text>`;
  el('dates').innerHTML = o;
}

function draw() { drawPrice(); drawVolume(); drawMacd(); drawDates(); }
window.addEventListener('resize', draw);
draw();
```
